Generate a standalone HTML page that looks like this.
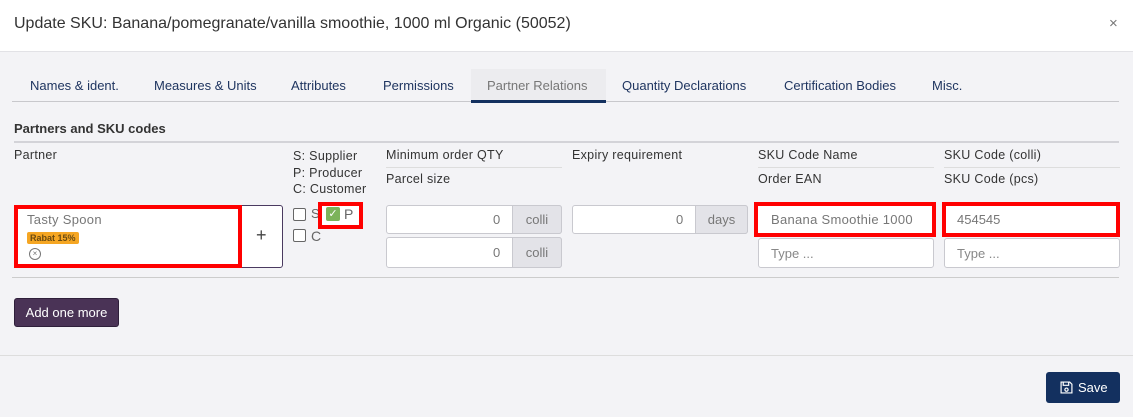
<!DOCTYPE html>
<html><head><meta charset="utf-8"><style>
*{box-sizing:border-box;margin:0;padding:0}
body{width:1133px;height:417px;background:#f3f3f6;font-family:"Liberation Sans",sans-serif;font-size:13px;color:#333;position:relative;overflow:hidden}
.a{position:absolute}
.hdr{left:0;top:0;width:1133px;height:52px;background:#fff;border-bottom:1px solid #e2e2e6}
.t{white-space:nowrap}
.tab{top:78px;font-size:13px;color:#1f3560}
.lbl{font-size:12.5px;color:#333;letter-spacing:0.3px}
.inp{background:#fff;border:1px solid #c9c9cf;border-radius:3px}
.add{background:#e3e3e8;border:1px solid #c9c9cf;color:#777;font-size:13px;text-align:center;line-height:28px}
.red{border:4px solid #f00}
.ph{color:#888;font-size:13px}
.cb{width:13px;height:13px;border:1.5px solid #666;border-radius:2px;background:#fff}
</style></head><body>
<div class="a hdr"></div>
<div class="a t" style="left:14px;top:15px;font-size:16px;color:#333">Update SKU: Banana/pomegranate/vanilla smoothie, 1000 ml Organic (50052)</div>
<div class="a t" style="left:1109px;top:15px;font-size:15px;color:#777">×</div>

<div class="a" style="left:471px;top:69px;width:135px;height:32px;background:#ececef"></div>
<div class="a" style="left:12px;top:101px;width:1107px;height:1px;background:#c8c8cc"></div>
<div class="a" style="left:471px;top:100px;width:135px;height:3px;background:#13305f"></div>
<div class="a t tab" style="left:30px">Names &amp; ident.</div>
<div class="a t tab" style="left:154px">Measures &amp; Units</div>
<div class="a t tab" style="left:291px">Attributes</div>
<div class="a t tab" style="left:383px">Permissions</div>
<div class="a t tab" style="left:487px;color:#777">Partner Relations</div>
<div class="a t tab" style="left:622px">Quantity Declarations</div>
<div class="a t tab" style="left:784px">Certification Bodies</div>
<div class="a t tab" style="left:932px">Misc.</div>

<div class="a t" style="left:14px;top:121px;font-weight:bold;font-size:13px;color:#333">Partners and SKU codes</div>
<div class="a" style="left:14px;top:141px;width:1105px;height:2px;background:#d3d3d8"></div>

<div class="a t lbl" style="left:14px;top:148px">Partner</div>
<div class="a t lbl" style="left:293px;top:148px;line-height:16.5px">S: Supplier<br>P: Producer<br>C: Customer</div>
<div class="a t lbl" style="left:386px;top:148px">Minimum order QTY</div>
<div class="a" style="left:386px;top:167px;width:176px;height:1px;background:#ddd"></div>
<div class="a t lbl" style="left:386px;top:172px">Parcel size</div>
<div class="a t lbl" style="left:572px;top:148px">Expiry requirement</div>
<div class="a t lbl" style="left:758px;top:148px">SKU Code Name</div>
<div class="a" style="left:758px;top:167px;width:176px;height:1px;background:#ddd"></div>
<div class="a t lbl" style="left:758px;top:172px">Order EAN</div>
<div class="a t lbl" style="left:944px;top:148px">SKU Code (colli)</div>
<div class="a" style="left:944px;top:167px;width:176px;height:1px;background:#ddd"></div>
<div class="a t lbl" style="left:944px;top:172px">SKU Code (pcs)</div>

<!-- partner -->
<div class="a" style="left:14px;top:205px;width:269px;height:63px;background:#fff;border:1px solid #4a3a60;border-radius:3px"></div>
<div class="a" style="left:241px;top:205px;width:1px;height:63px;background:#4a3a60"></div>
<div class="a t" style="left:256px;top:225px;font-size:18px;color:#444">+</div>
<div class="a red" style="left:14px;top:205px;width:228px;height:63px"></div>
<div class="a t" style="left:27px;top:212px;color:#777;font-size:13px;letter-spacing:0.3px">Tasty Spoon</div>
<div class="a t" style="left:27px;top:232px;background:#f5a623;color:#6a4a10;font-size:9px;font-weight:bold;padding:1px 3px;border-radius:2px">Rabat 15%</div>
<div class="a" style="left:29px;top:248px;width:12px;height:12px;border:1px solid #777;border-radius:50%;font-size:8px;line-height:10px;text-align:center;color:#777">×</div>

<!-- checkboxes -->
<div class="a cb" style="left:293px;top:208px"></div>
<div class="a t" style="left:311px;top:206px;color:#666">S</div>
<div class="a cb" style="left:293px;top:229px"></div>
<div class="a t" style="left:311px;top:228px;color:#666;font-size:14px">C</div>
<div class="a" style="left:318px;top:202px;width:45px;height:27px;background:#fff;border:4px solid #f00"></div>
<div class="a" style="left:326px;top:207px;width:14px;height:14px;background:#7cb35a;border-radius:2px;color:#fff;font-size:11px;line-height:14px;text-align:center">✓</div>
<div class="a t" style="left:344px;top:206px;color:#666;font-size:14px">P</div>

<!-- qty -->
<div class="a inp" style="left:386px;top:205px;width:176px;height:29px"></div>
<div class="a add" style="left:512px;top:205px;width:50px;height:29px;border-radius:0 3px 3px 0">colli</div>
<div class="a t ph" style="left:493px;top:212px;color:#777">0</div>
<div class="a inp" style="left:386px;top:237px;width:176px;height:31px"></div>
<div class="a add" style="left:512px;top:237px;width:50px;height:31px;border-radius:0 3px 3px 0;line-height:30px">colli</div>
<div class="a t ph" style="left:493px;top:245px;color:#777">0</div>
<div class="a inp" style="left:572px;top:205px;width:176px;height:29px"></div>
<div class="a add" style="left:695px;top:205px;width:53px;height:29px;border-radius:0 3px 3px 0">days</div>
<div class="a t ph" style="left:676px;top:212px;color:#777">0</div>

<!-- sku -->
<div class="a inp" style="left:758px;top:238px;width:176px;height:30px"></div>
<div class="a t ph" style="left:771px;top:246px">Type ...</div>
<div class="a red" style="left:754px;top:202px;width:182px;height:35px;background:#fff"></div>
<div class="a t" style="left:771px;top:212px;color:#777;letter-spacing:0.3px">Banana Smoothie 1000</div>
<div class="a inp" style="left:944px;top:238px;width:176px;height:30px"></div>
<div class="a t ph" style="left:957px;top:246px">Type ...</div>
<div class="a red" style="left:942px;top:202px;width:178px;height:35px;background:#fff"></div>
<div class="a t" style="left:957px;top:212px;color:#777">454545</div>

<div class="a" style="left:12px;top:277px;width:1107px;height:1px;background:#ccc"></div>
<div class="a t" style="left:14px;top:298px;width:105px;height:29px;background:#4a3356;border:1px solid #2e1f3a;border-radius:3px;color:#fff;font-size:13px;text-align:center;line-height:27px">Add one more</div>

<div class="a" style="left:0;top:355px;width:1133px;height:1px;background:#ddd"></div>
<div class="a" style="left:1046px;top:372px;width:74px;height:31px;background:#13305f;border-radius:3px;color:#fff;font-size:13px;line-height:31px">
<svg class="a" style="left:14px;top:9px" width="13" height="13" viewBox="0 0 12 12" fill="none" stroke="#fff" stroke-width="1.1"><path d="M1 1h8l2 2v8H1z"/><path d="M3 1v3h5V1"/><circle cx="6" cy="8" r="1.5"/></svg>
<span class="a" style="left:32px;top:0">Save</span></div>
</body></html>
